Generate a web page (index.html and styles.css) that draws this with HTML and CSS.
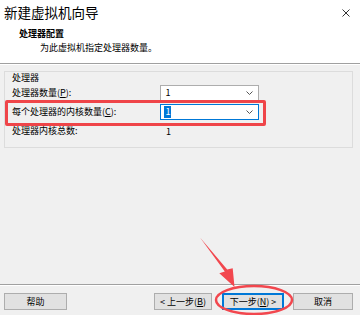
FILE: index.html
```html
<!DOCTYPE html>
<html lang="zh-CN">
<head>
  <meta charset="UTF-8" />
  <title>新建虚拟机向导</title>
  <link rel="stylesheet" href="styles.css">
</head>
<body>
  <div class="wizard">
    <div class="header">
      <div class="titlebar">
        <span class="title">新建虚拟机向导</span>
        <svg class="close" width="8" height="8" viewBox="0 0 8 8">
          <path d="M0.5 0.5 L7.5 7.5 M7.5 0.5 L0.5 7.5" stroke="#333" stroke-width="1" fill="none"/>
        </svg>
      </div>
      <div class="heading">处理器配置</div>
      <div class="subheading">为此虚拟机指定处理器数量。</div>
    </div>
    <div class="sep"></div>

    <div class="content">
      <div class="group">
        <div class="legend">处理器</div>
        <div class="row">
          <span class="label">处理器数量(<u>P</u>):</span>
          <div class="combo">
            <span class="value">1</span>
            <svg class="chev" width="7" height="4" viewBox="0 0 7 4"><path d="M0.5 0.5 L3.5 3.5 L6.5 0.5" stroke="#555" fill="none"/></svg>
          </div>
        </div>
        <div class="row highlight">
          <span class="label">每个处理器的内核数量(<u>C</u>):</span>
          <div class="combo active">
            <span class="value selected">1</span>
            <svg class="chev" width="7" height="4" viewBox="0 0 7 4"><path d="M0.5 0.5 L3.5 3.5 L6.5 0.5" stroke="#555" fill="none"/></svg>
          </div>
        </div>
        <div class="row">
          <span class="label">处理器内核总数:</span>
          <span class="total">1</span>
        </div>
      </div>
    </div>

    <div class="sep"></div>
    <div class="buttons">
      <button class="btn help">帮助</button>
      <div class="nav">
        <button class="btn back">&lt; 上一步(<u>B</u>)</button>
        <button class="btn next">下一步(<u>N</u>) &gt;</button>
        <button class="btn cancel">取消</button>
      </div>
    </div>
  </div>

  <svg class="marks" width="360" height="315" viewBox="0 0 360 315">
    <polygon points="200,237.5 224.8,271.4 219.3,273.3 234.5,287 232.7,268.3 227.2,269.6" fill="#f2474e"/>
    <ellipse cx="254" cy="300" rx="38" ry="14" fill="none" stroke="#f2474e" stroke-width="2.5"/>
  </svg>
</body>
</html>
```

FILE: styles.css
```css
body {
  margin: 0;
  font-family: "Noto Sans CJK SC", "Noto Sans", sans-serif;
  font-size: 9px;
  color: #000;
  background: #f0f0f0;
}

.wizard {
  width: 360px;
  height: 315px;
  display: flex;
  flex-direction: column;
}

.header {
  background: #fff;
  height: 63px;
}

.titlebar {
  display: flex;
  justify-content: space-between;
  align-items: center;
  padding: 4px 10px 0 4px;
  height: 16px;
}

.title {
  font-size: 13.5px;
  line-height: 16px;
}

.close {
  margin-top: 1px;
}

.heading {
  font-weight: bold;
  line-height: 12px;
  margin: 8px 0 0 19px;
}

.subheading {
  line-height: 12px;
  margin: 2px 0 0 40px;
}

.sep {
  border-top: 1px solid #a0a0a0;
  border-bottom: 1px solid #fff;
}

.content {
  flex: 1;
  padding: 6px 7px 0 4px;
}

.group {
  border: 1px solid #dcdcdc;
  padding: 0 0 8px 7px;
}

.legend {
  line-height: 10px;
  margin: 1px 0 2px;
}

.row {
  display: flex;
  align-items: center;
  height: 16px;
  margin-bottom: 3px;
  position: relative;
  width: 247px;
}

.row:last-child {
  margin-bottom: 0;
}

.label {
  width: 150px;
  line-height: 12px;
}

.label u,
.btn u {
  text-underline-offset: 1px;
}

.combo {
  height: 14px;
  width: 89px;
  background: #fff;
  border: 1px solid #adadad;
  display: flex;
  align-items: center;
  justify-content: space-between;
  padding: 0 5px 0 3px;
  margin-left: -1px;
}

.combo.active {
  border-color: #0078d7;
}

.value {
  line-height: 12px;
  padding: 0 1px;
}

.value.selected {
  background: #0078d7;
  color: #fff;
}

.total {
  padding-left: 4px;
}

.highlight::before {
  content: "";
  position: absolute;
  left: -7px;
  top: -4px;
  right: -7px;
  bottom: -6px;
  border: 3px solid #ef4549;
  border-radius: 2px;
  box-sizing: border-box;
}

.buttons {
  display: flex;
  justify-content: space-between;
  padding: 7px 7px 5px 4px;
}

.nav {
  display: flex;
}

.btn {
  font-family: inherit;
  font-size: 9px;
  height: 17px;
  padding: 0;
  background: #e1e1e1;
  border: 1px solid #adadad;
  color: #000;
  line-height: 12px;
}

.help { width: 63px; }
.back { width: 58px; }
.next {
  width: 62px;
  margin-left: 10px;
  border-color: #0078d7;
  box-shadow: inset 0 0 0 1px #0078d7;
}
.cancel {
  width: 60px;
  margin-left: 9px;
}

.marks {
  position: absolute;
  left: 0;
  top: 0;
  pointer-events: none;
}
```
